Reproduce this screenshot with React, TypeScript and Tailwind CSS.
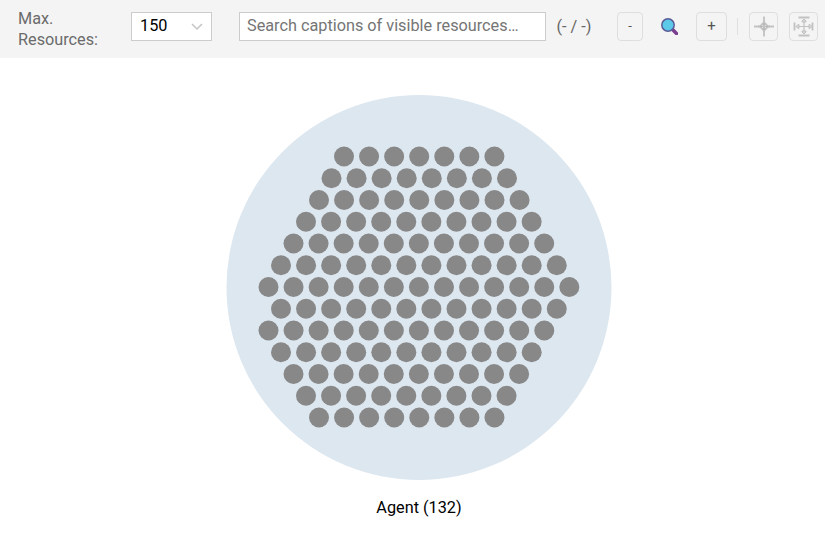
import React from 'react';

// x of first dot and number of dots per row
const rows = [
  [344, 7], [331.5, 8], [319, 9], [306, 10], [293.5, 11], [281, 12], [268.5, 13],
  [281, 12], [268.5, 12], [281, 11], [293.5, 10], [306, 9], [319, 8],
];

function FitIcon() {
  return (
    <svg width="22" height="22" viewBox="0 0 22 22" fill="none" stroke="#c2c2c2">
      <path d="M11 .5v20M1 10.500h20" strokeWidth="1.800" />
      <path d="M8.500 8h5M8.500 13h5M8 8.500v4M14 8.500v4" stroke="#b4b4b4" strokeWidth="1.300" />
      <path d="M9.500 6.500L11 5l1.500 1.500M9.500 14.500L11 16l1.500-1.500M6.500 9L5 10.500 6.500 12M15.500 9L17 10.500 15.500 12" strokeWidth="1" />
    </svg>
  );
}

function FillIcon() {
  return (
    <svg width="22" height="22" viewBox="0 0 22 22" fill="none" stroke="#c2c2c2">
      <path d="M5.500 1.500h11M5.500 19.500h11M1.500 6.500v8M19.500 6.500v8" strokeWidth="1.800" />
      <path d="M11 3v15M3 10.500h15" strokeWidth="1.200" />
      <path d="M9 5L11 3l2 2v1H9zM9 16L11 18l2-2v-1H9zM5 8.500L3 10.500l2 2h1v-4zM17 8.500l2 2-2 2h-1v-4z" fill="#d4d4d4" strokeWidth="1" />
    </svg>
  );
}

export default function App() {
  return (
    <div className="w-[825px] h-[543px] bg-white overflow-hidden font-['Roboto',sans-serif]">
      <div className="h-[58px] bg-[#f4f4f4] flex items-start pt-3 pl-[18px]">
        <div className="w-[113px] -mt-[4px] text-[16.25px] leading-[21px] text-[#6b6b6b]">
          Max.<br />Resources:
        </div>
        <div className="w-[81px] h-[29px] bg-white border border-[#cccccc] flex items-center justify-between pl-2 pr-[8px] text-[16.25px] text-black">
          <span>150</span>
          <svg width="12" height="8" viewBox="0 0 12 8" fill="none" stroke="#c4c4c4" strokeWidth="1.500"><path d="M1 1l5 5 5-5" /></svg>
        </div>
        <input
          className="ml-[27px] w-[307px] h-[29px] bg-white border border-[#cccccc] pl-[7px] pr-1 pb-[2px] text-[16.25px] outline-none placeholder:text-[#757575]"
          placeholder="Search captions of visible resources…"
        />
        <span className="ml-[11px] w-[34px] h-[29px] pt-[1px] flex items-center justify-center text-[16.25px] text-[#666666] whitespace-nowrap">(- / -)</span>
        <button className="ml-[26px] w-[26px] h-[29px] pb-[2px] border border-[#dedede] rounded text-[13px] text-[#555555]">-</button>
        <span className="w-[53px] h-[29px] flex items-center justify-center">
          <svg width="17" height="17" viewBox="0 0 17 17">
            <path d="M12 12l3.500 3.500" stroke="#7b3f8f" strokeWidth="3.500" strokeLinecap="round" />
            <circle cx="7" cy="7" r="6.200" fill="#5cc9e9" stroke="#5a5a98" strokeWidth="1.500" />
          </svg>
        </span>
        <button className="w-[31px] h-[29px] pb-[1px] border border-[#dedede] rounded text-[15px] text-[#555555]">+</button>
        <span className="ml-[10px] mr-[11px] mt-[6px] w-px h-[17px] bg-[#e0e0e0]" />
        <button className="w-[29px] h-[29px] border border-[#dedede] rounded flex items-center justify-center"><FitIcon /></button>
        <button className="ml-[11px] w-[29px] h-[29px] border border-[#dedede] rounded flex items-center justify-center"><FillIcon /></button>
      </div>
      <div className="pl-[226px] pt-[37px]">
        <svg width="386" height="386" viewBox="226 95 386 386" className="block">
          <circle cx="419" cy="287.500" r="192.500" fill="#dde7f0" />
          {rows.map(([x, n], r) =>
            Array.from({ length: n }, (_, i) => (
              <circle key={`${r}-${i}`} cx={x + i * 25.07} cy={156.500 + r * 21.750} r="10" fill="#888888" />
            ))
          )}
        </svg>
        <div className="w-[386px] mt-[17px] text-center text-[16.25px] leading-[20px] text-black">Agent (132)</div>
      </div>
    </div>
  );
}
